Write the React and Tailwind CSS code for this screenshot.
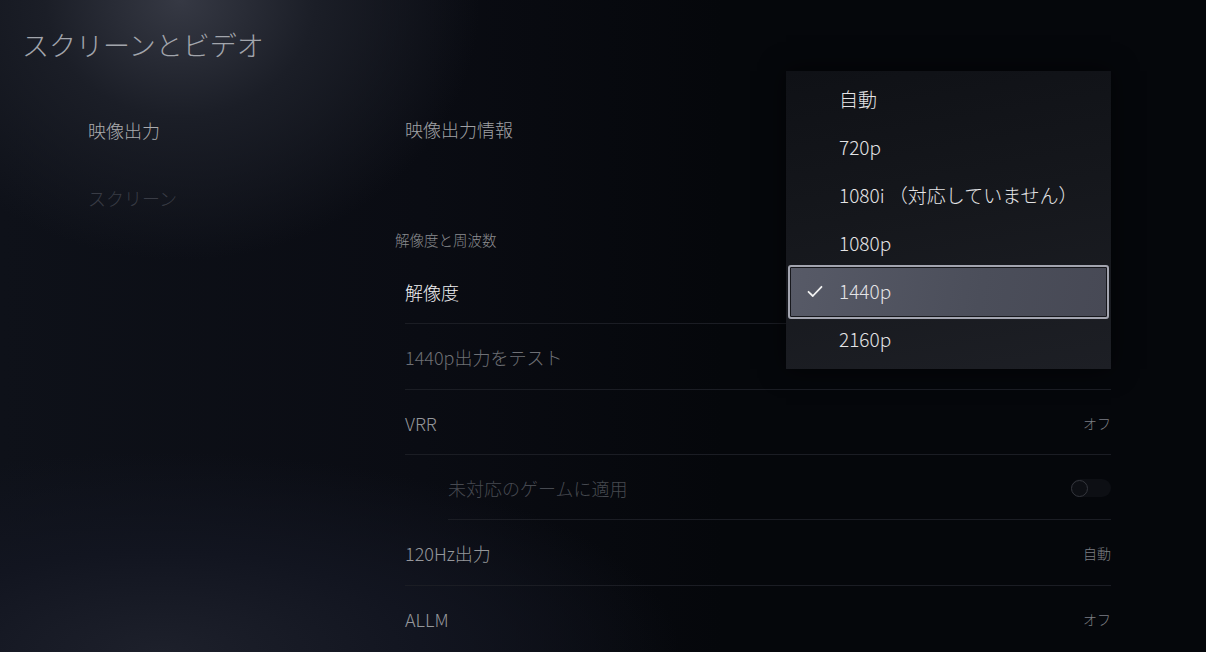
import React from "react";

const font = "font-['Noto_Sans_CJK_JP','Noto_Sans',sans-serif] font-light";

const resolutions = [
    { label: "自動" },
    { label: "720p" },
    { label: "1080i （対応していません）" },
    { label: "1080p" },
    { label: "1440p", selected: true },
    { label: "2160p" },
];

function SettingRow({ label, value, tone, indent, tall, divider = "full", children }) {
    return (
        <div className={`relative flex items-center pt-[1px] ${tall ? "h-[66px]" : "h-[65px]"}`}>
            <span className={`text-[18px] ${tone} ${indent ? "pl-[43px]" : ""}`}>{label}</span>
            <div className="ml-auto flex items-center">
                {value && <span className="text-[14px] text-[#7d7f84]">{value}</span>}
                {children}
            </div>
            {divider !== "none" && (
                <div
                    className={`absolute bottom-0 right-0 h-px bg-[#1b1d24] ${
                        divider === "indent" ? "left-[43px]" : "left-0"
                    }`}
                />
            )}
        </div>
    );
}

function ResolutionMenu() {
    return (
        <div className="absolute left-[786px] top-[71px] w-[325px] h-[298px] pt-[4px] bg-[linear-gradient(170deg,#0f1116_0%,#15171c_45%,#1d1f25_100%)] shadow-[0_0_24px_rgba(0,0,0,0.6)]">
            {resolutions.map((r) => (
                <div key={r.label} className="relative flex h-12 items-center">
                    {r.selected && (
                        <div className="absolute left-[2px] right-[2px] -top-[2px] -bottom-[4px] rounded-[3px] border-2 border-[#a3a5b0] bg-[linear-gradient(100deg,#575a67_0%,#4b4e5a_60%,#474955_100%)] shadow-[inset_0_0_0_1px_#17181d]" />
                    )}
                    <div className="relative flex w-[53px] justify-center pl-[4px] pt-[1px]">
                        {r.selected && (
                            <svg width="16" height="13" viewBox="0 0 16 13" fill="none">
                                <path d="M1.5 6.8 L5.8 11 L14.5 1.8" stroke="#f2f2f2" strokeWidth="1.8" strokeLinecap="round" strokeLinejoin="round" />
                            </svg>
                        )}
                    </div>
                    <span className="relative pt-[1px] text-[19px] text-[#e4e4e6]">{r.label}</span>
                </div>
            ))}
        </div>
    );
}

export default function App() {
    return (
        <div
            className={`relative w-[1206px] h-[652px] overflow-hidden ${font} bg-[radial-gradient(ellipse_300px_260px_at_180px_0px,#363944_0%,#1b1e27_45%,transparent_100%),radial-gradient(ellipse_520px_200px_at_160px_652px,#1d202b_0%,#121520_50%,transparent_100%),linear-gradient(90deg,#0e1119_0%,#0a0c13_35%,#05070b_60%,#05070b_100%)]`}
        >
            <div className="h-[96px] pl-[22px] pt-[26px]">
                <h1 className="text-[27px] leading-[38px] text-[#a2a5ac]">スクリーンとビデオ</h1>
            </div>

            <div className="flex pl-[88px]">
                <nav className="w-[317px] flex flex-col">
                    <div className="flex h-[68px] items-center pt-[1px] text-[18px] text-[#aaabae]">映像出力</div>
                    <div className="flex h-[68px] items-center pt-[1px] text-[18px] text-[#393c45]">スクリーン</div>
                </nav>

                <main className="w-[706px] flex flex-col">
                    <div className="flex h-[66px] items-center pt-[1px] text-[18px] text-[#a0a1a4]">映像出力情報</div>
                    <div className="h-[60px]" />
                    <div className="flex h-[34px] mb-[3px] items-center pt-[1px] -ml-[10px] text-[14.5px] text-[#8b8c90]">
                        解像度と周波数
                    </div>

                    <SettingRow label="解像度" tone="text-[#f0f0f2]" />
                    <SettingRow label="1440p出力をテスト" tone="text-[#6e7075]" tall />
                    <SettingRow label="VRR" value="オフ" tone="text-[#95979b]" />
                    <SettingRow label="未対応のゲームに適用" tone="text-[#464950]" indent divider="indent">
                        <div className="flex h-[18px] w-[40px] items-center rounded-full bg-[#0d0f14]">
                            <div className="h-[17px] w-[17px] rounded-full border-[1.5px] border-[#34363d]" />
                        </div>
                    </SettingRow>
                    <SettingRow label="120Hz出力" value="自動" tone="text-[#95979b]" tall />
                    <SettingRow label="ALLM" value="オフ" tone="text-[#95979b]" tall divider="none" />
                </main>
            </div>

            <ResolutionMenu />
        </div>
    );
}
